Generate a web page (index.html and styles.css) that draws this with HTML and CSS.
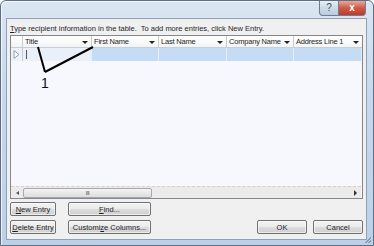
FILE: index.html
```html
<!DOCTYPE html>
<html lang="en">

<head>
    <meta charset="UTF-8">
    <title>New Address List</title>
    <link rel="stylesheet" href="styles.css">
</head>

<body>

    <!-- **** Dialog Window **** -->
    <div class="window">
        <div class="titlebar">
            <div class="cap-btn help">?</div>
            <div class="cap-btn close">x</div>
        </div>

        <div class="client">
            <p class="hint"><u>T</u>ype recipient information in the table.&nbsp; To add more entries, click New Entry.</p>

            <div class="grid">
                <div class="grid-head">
                    <div class="corner"></div>
                    <div class="col">Title<span class="arrow"></span></div>
                    <div class="col">First Name<span class="arrow"></span></div>
                    <div class="col">Last Name<span class="arrow"></span></div>
                    <div class="col">Company Name<span class="arrow"></span></div>
                    <div class="col">Address Line 1<span class="arrow"></span></div>
                </div>
                <div class="grid-row">
                    <div class="row-head">
                        <svg width="7" height="9" viewBox="0 0 7 9">
                            <path d="M1 0.5 L6 4.5 L1 8.5 Z" fill="#f4f7fb" stroke="#8ea3bf" stroke-width="1" />
                        </svg>
                    </div>
                    <div class="cell edit"><span class="caret"></span></div>
                    <div class="cell"></div>
                    <div class="cell"></div>
                    <div class="cell"></div>
                    <div class="cell"></div>
                </div>
                <div class="grid-body"></div>
                <div class="hscroll">
                    <span class="sarrow left"></span>
                    <div class="thumb"><span class="grip">III</span></div>
                    <div class="track"></div>
                    <span class="sarrow right"></span>
                </div>
            </div>

            <div class="actions">
                <div class="btn-grid">
                    <button class="btn"><u>N</u>ew Entry</button>
                    <button class="btn"><u>F</u>ind...</button>
                    <button class="btn"><u>D</u>elete Entry</button>
                    <button class="btn">Customi<u>z</u>e Columns...</button>
                </div>
                <div class="dialog-btns">
                    <button class="btn ok">OK</button>
                    <button class="btn ok">Cancel</button>
                </div>
            </div>
        </div>

        <span class="grip-corner"></span>

        <!-- callout drawn over the grid -->
        <svg class="callout" width="374" height="246" viewBox="0 0 374 246">
            <line x1="38" y1="47" x2="45" y2="72" stroke="#000" stroke-width="2" />
            <line x1="93" y1="47" x2="45" y2="72" stroke="#000" stroke-width="2" />
            <text x="41" y="88" class="callout-num">1</text>
        </svg>
    </div>

</body>

</html>
```

FILE: styles.css
```css
/* Reset CSS */
* {
    margin: 0;
    padding: 0;
    box-sizing: border-box;
}

body {
    width: 374px;
    height: 246px;
    overflow: hidden;
    font-family: "Liberation Sans", Arial, sans-serif;
    font-size: 7.5px;
    color: #1e1e1e;
    background: #fff;
}

/* Window frame */
.window {
    position: relative;
    width: 374px;
    height: 246px;
    display: flex;
    flex-direction: column;
    border: 1px solid #5c6f86;
    border-radius: 6px 6px 0 0;
    background: linear-gradient(180deg, #dbe6f2 0%, #c6d8ec 40%, #bcd1e8 100%);
    box-shadow: inset 1px 1px 0 rgba(255, 255, 255, 0.7);
}

.titlebar {
    height: 18px;
    display: flex;
    justify-content: flex-end;
    padding-right: 7px;
}

.cap-btn {
    height: 15px;
    font-size: 10px;
    line-height: 14px;
    text-align: center;
    border: 1px solid #6d7e91;
    border-top: none;
}

.help {
    width: 20px;
    color: #3d4d61;
    border-radius: 0 0 0 4px;
    background: linear-gradient(180deg, #e8eef5, #cdd9e6 50%, #bccbdc);
}

.close {
    width: 27px;
    color: #fff;
    font-weight: bold;
    border-left: none;
    border-radius: 0 0 4px 0;
    background: linear-gradient(180deg, #e7a99b, #cf5a45 50%, #c2392a);
}

/* Client area */
.client {
    flex: 1;
    margin: 0 6px 5px 5px;
    display: flex;
    flex-direction: column;
    padding: 0 3px 5px 3px;
    background: #f0f0f0;
    border: 1px solid #8ea1b6;
}

.hint {
    height: 16px;
    line-height: 19px;
    white-space: nowrap;
}

/* Grid */
.grid {
    height: 164px;
    display: flex;
    flex-direction: column;
    border: 1px solid #828790;
    background: #f7f8fd;
}

.grid-head,
.grid-row {
    display: grid;
    grid-template-columns: 12px 69px 67px 68px 67px 1fr;
}

.grid-head {
    height: 12px;
    border-bottom: 1px solid #c9cdd4;
    background: linear-gradient(180deg, #ffffff, #f3f4f6);
}

.corner,
.col {
    border-right: 1px solid #c8ccd2;
}

.col {
    position: relative;
    padding-left: 2px;
    line-height: 12px;
    letter-spacing: -0.2px;
    white-space: nowrap;
}

.col:last-child {
    border-right: none;
}

.arrow {
    position: absolute;
    right: 3px;
    top: 5px;
    border-left: 3px solid transparent;
    border-right: 3px solid transparent;
    border-top: 3px solid #222;
}

.grid-row {
    height: 13px;
}

.row-head {
    border-right: 1px solid #c8ccd2;
    background: #eef2f8;
    display: flex;
    align-items: center;
    padding-left: 2px;
}

.cell {
    background: #c4dcf4;
    border-right: 1px solid #e6eff9;
}

.cell.edit {
    background: #e9f0f9;
    padding: 2px 0 0 3px;
}

.caret {
    display: block;
    width: 1px;
    height: 9px;
    background: #555;
}

.grid-body {
    flex: 1;
}

/* Horizontal scrollbar */
.hscroll {
    height: 12px;
    margin: 0 1px 0 0;
    display: flex;
    align-items: center;
    background: #ebebeb;
    border-top: 1px dashed #e2c9cf;
}

.sarrow {
    width: 12px;
    display: flex;
    justify-content: center;
}

.sarrow.left::before {
    content: '';
    border-top: 2px solid transparent;
    border-bottom: 2px solid transparent;
    border-right: 3px solid #555;
}

.sarrow.right::before {
    content: '';
    border-top: 3px solid transparent;
    border-bottom: 3px solid transparent;
    border-left: 3px solid #333;
}

.thumb {
    width: 129px;
    height: 10px;
    border: 1px solid #a4a9b1;
    border-radius: 2px;
    background: linear-gradient(180deg, #f5f5f5, #dcdcdc);
    display: flex;
    justify-content: center;
    align-items: center;
}

.grip {
    font-size: 6px;
    line-height: 6px;
    color: #555;
    letter-spacing: -0.5px;
}

.track {
    flex: 1;
}

/* Buttons */
.actions {
    margin-top: 3px;
    display: flex;
    justify-content: space-between;
    align-items: flex-end;
}

.btn-grid {
    display: grid;
    grid-template-columns: 46px 83px;
    gap: 4px 12px;
}

.dialog-btns {
    display: flex;
    gap: 6px;
}

.btn {
    height: 14px;
    font-family: inherit;
    font-size: 7.5px;
    color: #1e1e1e;
    white-space: nowrap;
    border: 1px solid #707070;
    border-radius: 2px;
    background: linear-gradient(180deg, #f2f2f2 0%, #ebebeb 50%, #dddddd 51%, #cfcfcf 100%);
    box-shadow: inset 0 0 0 1px rgba(255, 255, 255, 0.6);
}

.ok {
    width: 50px;
}

.grip-corner {
    position: absolute;
    right: 2px;
    bottom: 2px;
    width: 6px;
    height: 6px;
    background: linear-gradient(135deg, transparent 50%, #8c9aab 50%, #8c9aab 62%, transparent 62%, transparent 75%, #8c9aab 75%, #8c9aab 87%, transparent 87%);
}

/* Callout */
.callout {
    position: absolute;
    left: -1px;
    top: -1px;
    pointer-events: none;
}

.callout-num {
    font-family: "Liberation Sans", Arial, sans-serif;
    font-size: 14px;
    fill: #111;
}
```
